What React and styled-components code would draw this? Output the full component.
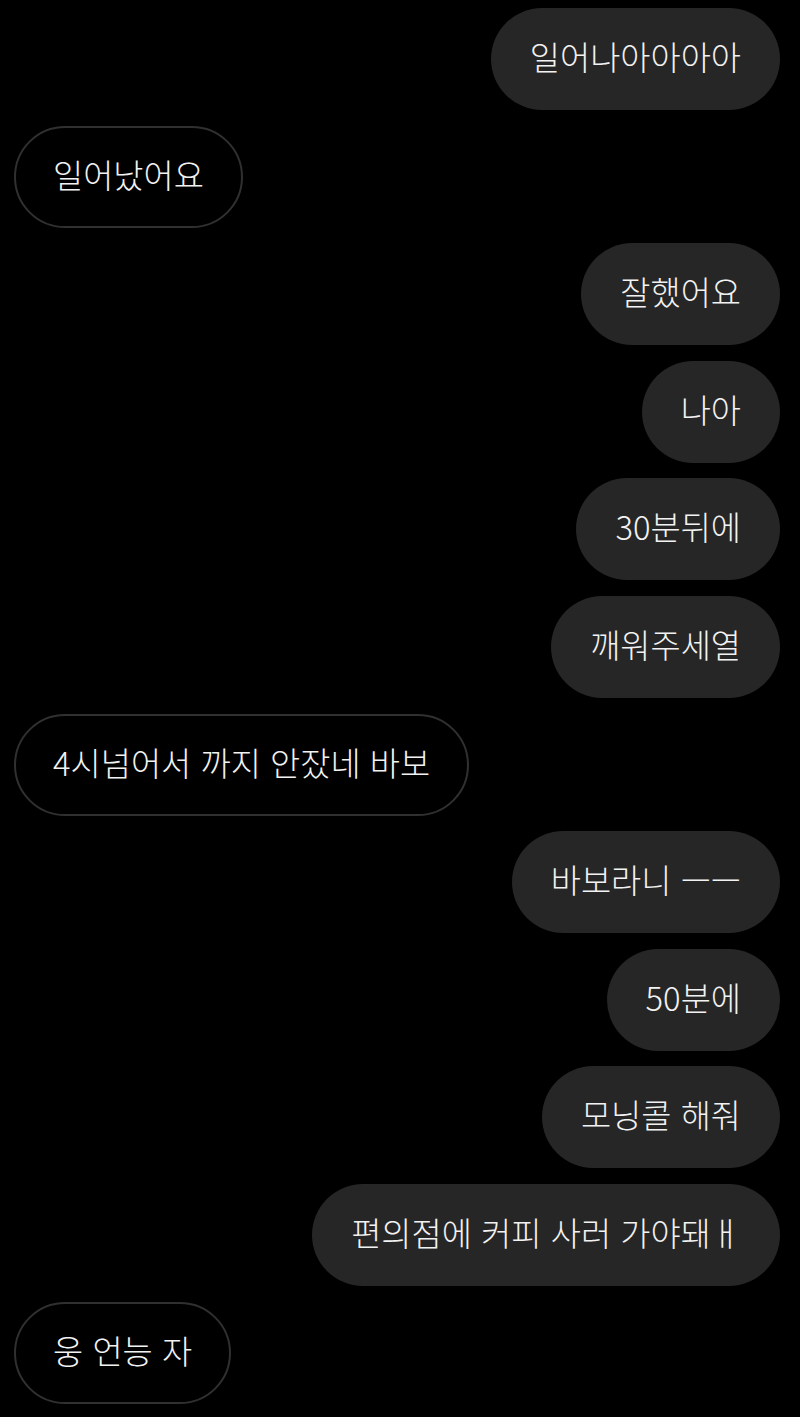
import React from "react";
import styled, { createGlobalStyle } from "styled-components";

const messages = [
  { me: true, text: "일어나아아아아" },
  { me: false, text: "일어났어요" },
  { me: true, text: "잘했어요" },
  { me: true, text: "나아" },
  { me: true, text: "30분뒤에" },
  { me: true, text: "깨워주세열" },
  { me: false, text: "4시넘어서 까지 안잤네 바보" },
  { me: true, text: "바보라니 ㅡㅡ" },
  { me: true, text: "50분에" },
  { me: true, text: "모닝콜 해줘" },
  { me: true, text: "편의점에 커피 사러 가야돼ㅐ" },
  { me: false, text: "웅 언능 자" },
];

const GlobalStyle = createGlobalStyle`
  html, body {
    margin: 0;
    padding: 0;
    background: #000;
  }
  body {
    font-family: "Noto Sans CJK KR", "Noto Sans", sans-serif;
    -webkit-font-smoothing: antialiased;
  }
`;

const Thread = styled.div`
  display: flex;
  flex-direction: column;
  gap: 15.6px;
  padding: 8px 20px 13px 14px;
  min-height: 1417px;
  box-sizing: border-box;
  background: #000;
`;

const Row = styled.div`
  display: flex;
  justify-content: ${(p) => (p.$me ? "flex-end" : "flex-start")};
`;

const Bubble = styled.div`
  box-sizing: border-box;
  height: 102px;
  display: flex;
  align-items: center;
  padding: 0 ${(p) => (p.$me ? 39 : 37)}px 5px;
  border-radius: 51px;
  background: ${(p) => (p.$me ? "#262626" : "#000")};
  border: ${(p) => (p.$me ? "none" : "2px solid #303030")};
  color: #f2f2f2;
  font-size: 32.8px;
  font-weight: 300;
  line-height: 1;
  word-spacing: 2px;
  white-space: nowrap;
`;

export default function App() {
  return (
    <>
      <GlobalStyle />
      <Thread>
        {messages.map((m, i) => (
          <Row key={i} $me={m.me}>
            <Bubble $me={m.me}>{m.text}</Bubble>
          </Row>
        ))}
      </Thread>
    </>
  );
}
